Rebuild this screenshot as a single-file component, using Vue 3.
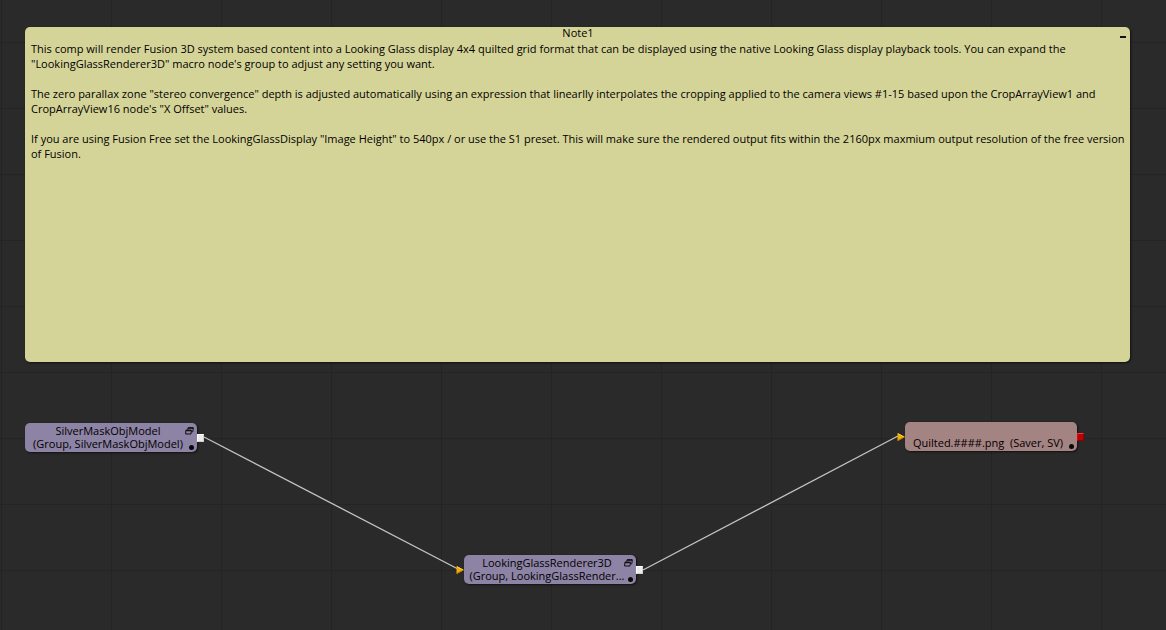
<script setup>
const paragraphs = [
  `This comp will render Fusion 3D system based content into a Looking Glass display 4x4 quilted grid format that can be displayed using the native Looking Glass display playback tools. You can expand the "LookingGlassRenderer3D" macro node's group to adjust any setting you want.`,
  `The zero parallax zone "stereo convergence" depth is adjusted automatically using an expression that linearlly interpolates the cropping applied to the camera views #1-15 based upon the CropArrayView1 and CropArrayView16 node's "X Offset" values.`,
  `If you are using Fusion Free set the LookingGlassDisplay "Image Height" to 540px / or use the S1 preset. This will make sure the rendered output fits within the 2160px maxmium output resolution of the free version of Fusion.`,
]
const nodes = [
  { id: 'mask', x: 25, y: 423, title: 'SilverMaskObjModel', type: '(Group, SilverMaskObjModel)', group: true },
  { id: 'renderer', x: 464, y: 555, title: 'LookingGlassRenderer3D', type: '(Group, LookingGlassRender...', group: true, input: true },
  { id: 'saver', x: 905, y: 422, title: '', type: 'Quilted.####.png  (Saver, SV)', input: true, saver: true },
]
</script>

<template>
  <main class="flow">
    <svg class="wires" aria-hidden="true">
      <path d="M204 437L458 569M643 570L898 436" />
    </svg>
    <section class="note">
      <header class="bar">
        <h1>Note1</h1>
        <button class="fold" aria-label="Collapse note"></button>
      </header>
      <p v-for="p in paragraphs" :key="p">{{ p }}</p>
    </section>
    <article
      v-for="n in nodes"
      :key="n.id"
      class="node"
      :class="{ saver: n.saver }"
      :style="{ left: n.x + 'px', top: n.y + 'px' }"
    >
      <div class="line">{{ n.title }}</div>
      <div class="line">{{ n.type }}</div>
      <svg v-if="n.group" class="group" viewBox="0 0 9 8" aria-hidden="true">
        <path d="M2.7 2.8L3 .8H8.3L7.8 4.8H6.8M.9 3.3H6.4L6 7H.6z" />
        <path class="heavy" d="M3 1H8.3M.9 3.5H6.4" />
      </svg>
      <span class="dot"></span>
      <svg v-if="n.input" class="input" viewBox="0 0 8 8" aria-hidden="true">
        <path d="M.5 0L8 4L.5 8z" fill="#f2ae00" />
        <path d="M1 .7L7 4" stroke="#ffd24a" />
        <path d="M1 7.4L7.4 4" stroke="#b97a00" />
      </svg>
      <span class="output"></span>
    </article>
  </main>
</template>

<style>
body { margin: 0; background: #2a2a2a; }
</style>

<style scoped>
.flow {
  position: relative;
  box-sizing: border-box;
  min-height: 100vh;
  padding: 27px 36px 0 25px;
  overflow: hidden;
  color: #000;
  font: 11px/15px "Open Sans", sans-serif;
  background:
    linear-gradient(90deg, #242424 1px, transparent 1px) 1px 0 / 110px 66px,
    linear-gradient(#242424 1px, transparent 1px) 0 42px / 110px 66px,
    #2a2a2a;
}
.wires { position: absolute; inset: 0; width: 100%; height: 100%; fill: none; stroke: #c4c4c4; stroke-width: 1.3; }
.note {
  position: relative;
  box-sizing: border-box;
  min-height: 335px;
  padding: 0 5px 6px 6px;
  border-radius: 5px;
  background: #d5d498;
  box-shadow: 1px 1px 2px #111;
}
.bar { display: flex; justify-content: center; height: 14px; }
h1 { margin: 0; font-size: 11px; font-weight: 400; line-height: 12px; }
.fold { position: absolute; top: 9px; right: 4px; width: 6px; height: 2px; padding: 0; border: 0; background: #111; }
p { margin: 0 0 15px; }
.node {
  position: absolute;
  box-sizing: border-box;
  width: 172px;
  height: 29px;
  padding: 1px 8px 2px 2px;
  border-radius: 5px;
  background: #8d83a5;
  box-shadow: 1px 1px 2px #111;
  line-height: 13px;
  text-align: center;
  white-space: pre;
}
.saver { background: #a48383; }
.line { height: 13px; }
.group { position: absolute; top: 4px; right: 3px; width: 9px; height: 8px; fill: none; stroke: #111; }
.heavy { stroke-width: 1.5; }
.dot { position: absolute; right: 3px; bottom: 2px; width: 5px; height: 5px; border-radius: 50%; background: #080808; }
.input { position: absolute; left: -8px; top: 11px; width: 8px; height: 8px; fill: none; }
.output {
  position: absolute;
  right: -7px;
  top: 11px;
  box-sizing: border-box;
  width: 7px;
  height: 8px;
  border: 1px solid #fff;
  border-color: #fff #d0d0d0 #d0d0d0 #fff;
  background: #ececec;
}
.saver .output { border-color: #e04040 #8c0000 #8c0000 #d01010; background: #c00000; }
</style>
